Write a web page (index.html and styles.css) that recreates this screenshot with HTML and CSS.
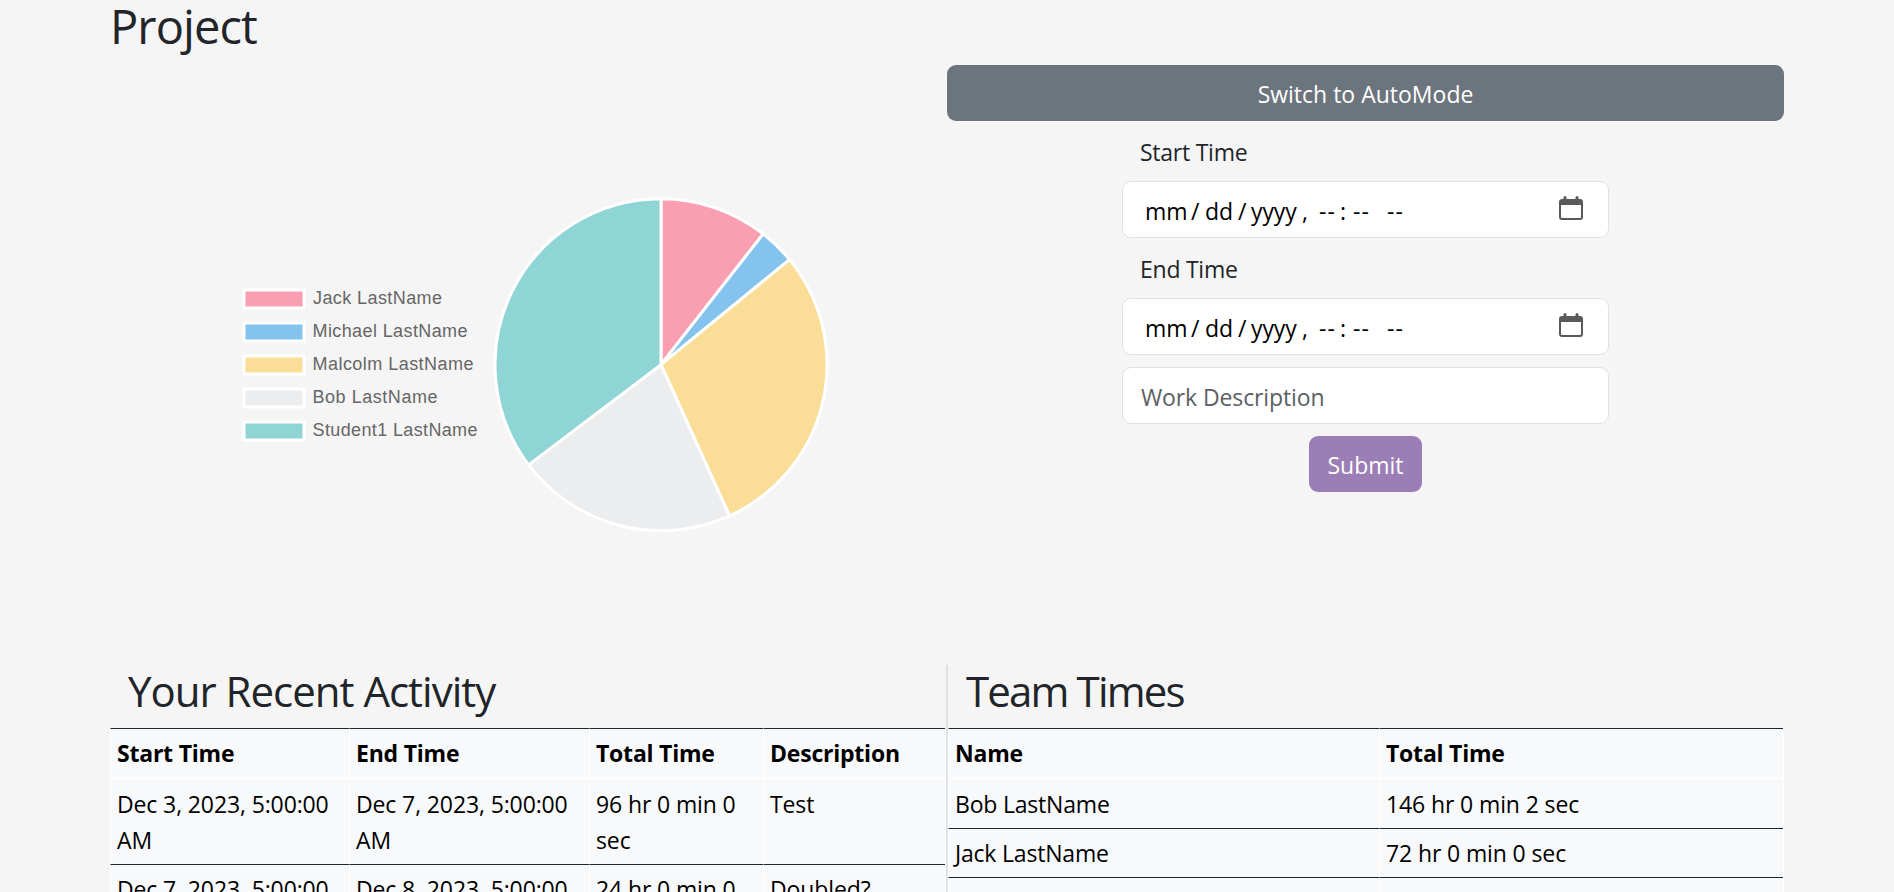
FILE: index.html
```
<!DOCTYPE html>
<html lang="en">
<head>
<meta charset="utf-8">
<title>Project</title>
<link rel="stylesheet" href="styles.css">
</head>
<body>
<main class="page">
  <div class="container">
  <h1 class="title">Project</h1>
  <div class="top">
    <div class="chart">
      <svg class="pie" width="837" height="420" viewBox="110 125 837 420" role="img" aria-label="Time per member">
        <g stroke="#fff" stroke-width="3">
          <rect x="244" y="290" width="60" height="18" fill="#fa9fb1"/>
          <rect x="244" y="323" width="60" height="18" fill="#85c3ef"/>
          <rect x="244" y="356" width="60" height="18" fill="#fade97"/>
          <rect x="244" y="389" width="60" height="18" fill="#ecedef"/>
          <rect x="244" y="422" width="60" height="18" fill="#90d5d5"/>
        </g>
        <g class="legend">
          <text x="313" y="304" textLength="129">Jack LastName</text>
          <text x="312.500" y="337" textLength="155">Michael LastName</text>
          <text x="312.500" y="370" textLength="161">Malcolm LastName</text>
          <text x="312.500" y="403" textLength="125">Bob LastName</text>
          <text x="312.500" y="436" textLength="165">Student1 LastName</text>
        </g>
        <g class="slices" stroke="#fff" stroke-width="3" stroke-linejoin="bevel"></g>
      </svg>
    </div>
    <div class="side">
      <button class="btn switch">Switch to AutoMode</button>
      <form class="form">
        <label class="label">Start Time</label>
        <div class="input date">
          <span>mm</span><span>/</span><span>dd</span><span>/</span><span>yyyy</span><span>,</span><span class="dash">--</span><span>:</span><span class="dash">--</span><span class="dash">--</span>
          <svg class="cal" width="24" height="25" viewBox="0 0 24 25"><path fill="#5a5a5a" fill-rule="evenodd" d="M3 3h1.500V1.500a1.500 1.500 0 0 1 3 0V3h9V1.500a1.500 1.500 0 0 1 3 0V3H21a3 3 0 0 1 3 3v15a3 3 0 0 1-3 3H3a3 3 0 0 1-3-3V6a3 3 0 0 1 3-3zM2 9v12a1 1 0 0 0 1 1h18a1 1 0 0 0 1-1V9z"/></svg>
        </div>
        <label class="label">End Time</label>
        <div class="input date">
          <span>mm</span><span>/</span><span>dd</span><span>/</span><span>yyyy</span><span>,</span><span class="dash">--</span><span>:</span><span class="dash">--</span><span class="dash">--</span>
          <svg class="cal" width="24" height="25" viewBox="0 0 24 25"><path fill="#5a5a5a" fill-rule="evenodd" d="M3 3h1.500V1.500a1.500 1.500 0 0 1 3 0V3h9V1.500a1.500 1.500 0 0 1 3 0V3H21a3 3 0 0 1 3 3v15a3 3 0 0 1-3 3H3a3 3 0 0 1-3-3V6a3 3 0 0 1 3-3zM2 9v12a1 1 0 0 0 1 1h18a1 1 0 0 0 1-1V9z"/></svg>
        </div>
        <div class="input desc">Work Description</div>
        <button class="btn submit">Submit</button>
      </form>
    </div>
  </div>
  <div class="bottom">
    <section>
      <h2 class="heading">Your Recent Activity</h2>
      <div class="grid activity">
        <b>Start Time</b><b>End Time</b><b>Total Time</b><b>Description</b>
        <p>Dec 3, 2023, 5:00:00<br>AM</p><p>Dec 7, 2023, 5:00:00<br>AM</p><p>96 hr 0 min 0<br>sec</p><p>Test</p>
        <p>Dec 7, 2023, 5:00:00</p><p>Dec 8, 2023, 5:00:00</p><p>24 hr 0 min 0</p><p>Doubled?</p>
      </div>
    </section>
    <section class="team">
      <h2 class="heading">Team Times</h2>
      <div class="grid times">
        <b>Name</b><b>Total Time</b>
        <p class="name">Bob LastName</p><p>146 hr 0 min 2 sec</p>
        <p class="name">Jack LastName</p><p>72 hr 0 min 0 sec</p>
        <p></p><p></p>
      </div>
    </section>
  </div>
  </div>
</main>
<script src="chart.js"></script>
</body>
</html>
```
FILE: styles.css
```
* { box-sizing: border-box; margin: 0; }
body { background: #f5f5f5; color: #212529; font: 23px/36px "Open Sans", "Noto Sans", sans-serif; letter-spacing: -0.12px; }
.page { height: 892px; overflow: hidden; }
.container { width: 1674px; margin: 0 auto; }
.title { font-size: 47px; font-weight: 400; line-height: 52px; height: 65px; letter-spacing: -0.9px; }
.top { display: grid; grid-template-columns: 837px 837px; height: 600px; }
.chart { padding-top: 60px; }
.pie { display: block; }
.legend { font: 18px "Liberation Sans", Arial, sans-serif; letter-spacing: 0; fill: #666; }
.btn { border: 0; border-radius: 9px; height: 56px; color: #fff; font: inherit; display: block; padding: 1px 0 0; }
.switch { width: 837px; background: #6c757d; }
.form { width: 487px; margin: 0 auto; }
.label { display: block; height: 60px; padding: 13px 18px 0; letter-spacing: -0.25px; }
.input { height: 57px; background: #fff; border: 1px solid #dee2e6; border-radius: 9px; padding: 11px 18px 8px; }
.date { color: #000; display: grid; grid-template-columns: 46px 14px 33px 13px 51px 17px 21px 13px 34px 1fr 24px; padding: 11px 25px 8px 22px; }
.dash { letter-spacing: 1px; }
.desc { margin-top: 12px; color: #5c6064; }
.submit { width: 113px; margin: 12px auto 0; background: #9b7eb6; }
.cal { margin-top: 3px; }
.bottom { display: flex; }
.team { border-left: 2px solid #dee2e6; }
.heading { font-size: 42px; font-weight: 400; line-height: 51px; height: 63px; padding: 0 18px; letter-spacing: -1px; }
.team .heading { letter-spacing: -1.85px; }
.grid { display: grid; background: #f8f9fb; width: 836px; color: #000; border-right: 1px solid #fff; }
.activity { grid-template-columns: 239px 240px 174px 182px; }
.times { grid-template-columns: 431px 404px; }
.grid b { border-left: 1px solid #fff; border-top: 1px solid #212529; border-bottom: 3px solid #fdfdfd; padding: 6px; height: 52px; letter-spacing: -0.22px; }
.grid p { border-left: 1px solid #fff; border-bottom: 1px solid #212529; padding: 6px; min-height: 49px; white-space: nowrap; }
.grid .name { letter-spacing: -0.2px; }
```
FILE: chart.js
```
const slices = [[0, 38, "#fa9fb1"], [38, 50.75, "#85c3ef"], [50.75, 155.65, "#fade97"], [155.65, 232.9, "#ecedef"], [232.9, 360, "#90d5d5"]];
const cx = 661, cy = 364.7, r = 166;
const pt = a => (cx + r * Math.sin(a * Math.PI / 180)).toFixed(2) + " " + (cy - r * Math.cos(a * Math.PI / 180)).toFixed(2);
document.querySelector(".slices").innerHTML = slices.map(([a, b, c]) =>
  `<path fill="${c}" d="M${cx} ${cy}L${pt(a)}A${r} ${r} 0 0 1 ${pt(b)}Z"/>`).join("");
```
